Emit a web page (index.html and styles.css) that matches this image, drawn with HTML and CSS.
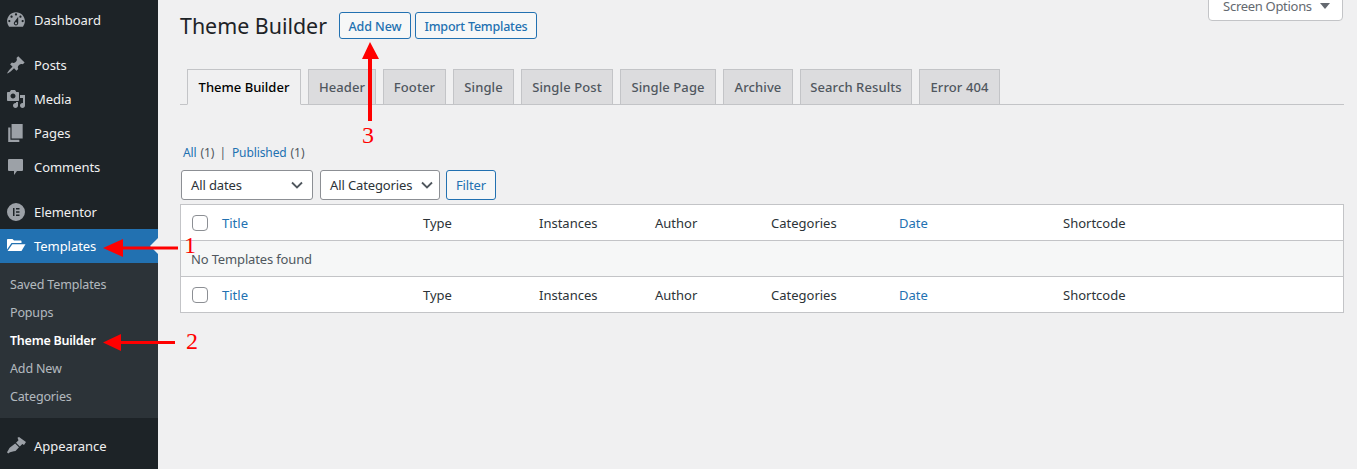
FILE: index.html
```html
<!DOCTYPE html>
<html lang="en">
<head>
<meta charset="utf-8">
<title>Theme Builder</title>
<link rel="stylesheet" href="styles.css">
</head>
<body>
<div class="page">
  <nav class="sidebar">
    <a class="item"><svg class="ico" viewBox="1 1 18 18"><path fill-rule="evenodd" d="M3.760 16h12.480c1.100-1.370 1.760-3.110 1.760-5 0-4.420-3.580-8-8-8s-8 3.580-8 8c0 1.890.66 3.630 1.760 5zM10 4c.55 0 1 .45 1 1s-.45 1-1 1-1-.45-1-1 .45-1 1-1zM6 6c.55 0 1 .45 1 1s-.45 1-1 1-1-.45-1-1 .45-1 1-1zm8 0c.55 0 1 .45 1 1s-.45 1-1 1-1-.45-1-1 .45-1 1-1zm-5.370 5.550L12 7v6c0 1.100-.9 2-2 2s-2-.9-2-2c0-.57.24-1.080.63-1.450zM4 10c.55 0 1 .45 1 1s-.45 1-1 1-1-.45-1-1 .45-1 1-1zm12 0c.55 0 1 .45 1 1s-.45 1-1 1-1-.45-1-1 .45-1 1-1zm-5 3c0-.55-.45-1-1-1s-1 .45-1 1 .45 1 1 1 1-.45 1-1z"/></svg><span>Dashboard</span></a>
    <div class="group">
      <a class="item"><svg class="ico" viewBox="0 0 20 20"><path d="M10.440 3.020l1.820-1.820 6.360 6.350-1.830 1.820c-1.050-.68-2.480-.57-3.410.36l-.75.75c-.92.93-1.040 2.350-.35 3.410l-1.830 1.820-2.410-2.410-2.800 2.790c-.42.42-3.380 2.710-3.800 2.290s1.860-3.390 2.280-3.810l2.790-2.790L4.100 9.360l1.830-1.820c1.050.69 2.480.57 3.400-.36l.75-.75c.93-.92 1.050-2.350.36-3.410z"/></svg><span>Posts</span></a>
      <a class="item"><svg class="ico" viewBox="0 0 20 20"><path fill-rule="evenodd" d="M13 11V4c0-.55-.45-1-1-1h-1.670L9 1H5L3.670 3H2c-.55 0-1 .45-1 1v7c0 .55.45 1 1 1h10c.55 0 1-.45 1-1zM7 4.500c1.380 0 2.500 1.120 2.500 2.500S8.380 9.500 7 9.500 4.500 8.380 4.500 7 5.620 4.500 7 4.500zM14 6h5v10.500c0 1.380-1.120 2.500-2.500 2.500S14 17.880 14 16.500s1.120-2.500 2.500-2.500c.17 0 .34.020.5.050V9h-3V6zm-4 8.050V13h2v3.500c0 1.380-1.120 2.500-2.500 2.500S7 17.880 7 16.500 8.120 14 9.500 14c.17 0 .34.020.5.050z"/></svg><span>Media</span></a>
      <a class="item"><svg class="ico" viewBox="1 1 18 18"><path d="M6 15V2h10v13H6zm-1 1h8v2H3V5h2v11z"/></svg><span>Pages</span></a>
      <a class="item"><svg class="ico" viewBox="0 0 20 20"><path d="M3 2h13a1 1 0 0 1 1 1v10a1 1 0 0 1-1 1h-5l-3 4v-4H3a1 1 0 0 1-1-1V3a1 1 0 0 1 1-1z"/></svg><span>Comments</span></a>
    </div>
    <div class="group">
      <a class="item"><svg class="ico" viewBox="0 0 20 20"><path fill-rule="evenodd" d="M10 1a9 9 0 1 0 0 18 9 9 0 0 0 0-18zM7 6h1.500v8H7zM10 6h3.500v1.500H10zM10 9.200h3.500v1.600H10zM10 12.500h3.500V14H10z"/></svg><span>Elementor</span></a>
      <a class="item current"><svg class="ico" viewBox="0 0 20 20"><path d="M1 4c0-.6.4-1 1-1h4.500L8 4.500h6.500c.6 0 1 .4 1 1V7H5.500L1 13.500z"/><path d="M6.300 8.200H19.500L15.500 15H1.600z"/></svg><span>Templates</span></a>
    </div>
    <ul class="submenu">
      <li>Saved Templates</li>
      <li>Popups</li>
      <li class="on">Theme Builder</li>
      <li>Add New</li>
      <li>Categories</li>
    </ul>
    <div class="group">
      <a class="item"><svg class="ico" viewBox="0 0 20 20"><path d="M11.500 1.800 13 1 20 6 18 9 16.300 8 13.800 10.500 10 6.700 12.500 4.200z"/><path d="M9.200 7.500 13 11.300 9.500 15C7.500 15.500 4.500 15.500 2.200 17.500L1 16.200C2.500 14 3 12.500 4 11.500z"/></svg><span>Appearance</span></a>
    </div>
  </nav>

  <main class="main">
    <button class="screen-options">Screen Options <i class="tri"></i></button>
    <header class="heading">
      <h1>Theme Builder</h1>
      <a class="btn add">Add New</a>
      <a class="btn import">Import Templates</a>
    </header>
    <div class="tabs">
      <a class="tab active">Theme Builder</a>
      <a class="tab">Header</a>
      <a class="tab">Footer</a>
      <a class="tab">Single</a>
      <a class="tab">Single Post</a>
      <a class="tab">Single Page</a>
      <a class="tab">Archive</a>
      <a class="tab">Search Results</a>
      <a class="tab">Error 404</a>
    </div>
    <div class="views"><a>All</a> (1) <b>|</b> <a>Published</a> (1)</div>
    <div class="filters">
      <div class="select dates">All dates<svg class="chev" viewBox="0 0 12 8"><path d="M1 1.500 6 6.500 11 1.500"/></svg></div>
      <div class="select cats">All Categories<svg class="chev" viewBox="0 0 12 8"><path d="M1 1.500 6 6.500 11 1.500"/></svg></div>
      <a class="btn filter">Filter</a>
    </div>
    <div class="table">
      <div class="row">
        <span class="cell chk"><i class="box"></i></span>
        <span class="cell link">Title</span><span class="cell">Type</span><span class="cell">Instances</span><span class="cell">Author</span><span class="cell">Categories</span><span class="cell link">Date</span><span class="cell">Shortcode</span>
      </div>
      <div class="empty">No Templates found</div>
      <div class="row foot">
        <span class="cell chk"><i class="box"></i></span>
        <span class="cell link">Title</span><span class="cell">Type</span><span class="cell">Instances</span><span class="cell">Author</span><span class="cell">Categories</span><span class="cell link">Date</span><span class="cell">Shortcode</span>
      </div>
    </div>
  </main>

  <svg class="arrows" viewBox="0 0 1357 469">
    <path d="M178 246.500H123V239L103 248 123 257V249.500H178z"/>
    <path d="M175 341H121V334L103 342.500 121 351V344H175z"/>
    <path d="M368 121V59H362L370 42 379 59H372V121z"/>
  </svg>
  <span class="num n1">1</span>
  <span class="num n2">2</span>
  <span class="num n3">3</span>
</div>
</body>
</html>
```
FILE: styles.css
```css
* { box-sizing: border-box; }
html, body { margin: 0; height: 100%; overflow: hidden; }
body { background: #f0f0f1; font-family: "Noto Sans", "Open Sans", sans-serif; font-size: 13px; color: #3c434a; }
.page { position: relative; display: flex; width: 1357px; height: 469px; overflow: hidden; }

.sidebar { width: 158px; flex: none; background: #1d2327; padding-top: 3px; display: flex; flex-direction: column; }
.group { margin-top: 11px; }
.item { display: flex; align-items: center; height: 34px; padding-left: 6px; color: #f0f0f1; font-size: 13px; position: relative; letter-spacing: -.05px; }
.item span { margin-left: 8px; }
.ico { width: 20px; height: 20px; fill: #9ca1a7; flex: none; }
.current { background: #2271b1; color: #fff; }
.current .ico { fill: #fff; }
.current::after { content: ""; position: absolute; right: 0; top: 9px; border: 8px solid transparent; border-right-color: #f0f0f1; border-left-width: 0; }
.submenu { list-style: none; margin: 0; padding: 8px 0 6px; background: #2c3338; height: 155px; }
.submenu li { height: 28px; line-height: 28px; padding-left: 10px; color: rgba(240,246,252,.7); font-size: 12.5px; letter-spacing: -.15px; }
.submenu .on { color: #fff; font-weight: 600; letter-spacing: -.25px; }

.main { flex: 1; min-width: 0; position: relative; padding-left: 22px; padding-right: 13px; }
.screen-options { position: absolute; top: -10px; right: 14px; width: 135px; height: 31px; padding: 0 0 0 2px; background: #fff; border: 1px solid #c3c4c7; border-radius: 0 0 4px 4px; color: #646970; font: 13px "Noto Sans", sans-serif; letter-spacing: -.3px; }
.tri { display: inline-block; margin-left: 5px; border: 5px solid transparent; border-top: 6px solid #646970; border-bottom: 0; vertical-align: 2px; }

.heading { display: flex; align-items: flex-start; padding-top: 12px; height: 69px; }
h1 { margin: 0 12px 0 0; font-size: 21.4px; font-weight: 400; line-height: 28px; color: #1d2327; width: 147px; white-space: nowrap; }
.btn { display: inline-flex; align-items: center; justify-content: center; height: 27px; margin-right: 4px; border: 1px solid #2271b1; border-radius: 3px; background: #f6f7f7; color: #2271b1; font-size: 12.5px; font-weight: 500; letter-spacing: -.1px; white-space: nowrap; }
.add { width: 72px; padding-top: 1px; }
.import { width: 122px; padding-top: 1px; letter-spacing: -.22px; }

.tabs { display: grid; grid-template-columns: 114px 68px 63px 61px 92px 96px 70px 112px 81px; gap: 7px; height: 36px; padding-left: 7px; border-bottom: 1px solid #c3c4c7; }
.tab { display: flex; align-items: center; justify-content: center; height: 36px; border: 1px solid #c3c4c7; background: #dcdcde; color: #50575e; font-size: 13px; font-weight: 500; letter-spacing: .1px; white-space: nowrap; }
.active { background: #f0f0f1; color: #000; border-bottom-color: #f0f0f1; letter-spacing: 0; }

.views { margin-top: 39px; height: 17px; line-height: 17px; font-size: 12px; padding-left: 3px; color: #50575e; word-spacing: 1px; letter-spacing: -.1px; }
.views a { color: #2271b1; }
.views b { font-weight: 400; color: #50575e; margin: 0 2px 0 1px; }

.filters { display: flex; align-items: flex-start; margin-top: 9px; padding-left: 1px; gap: 7px; }
.select { display: flex; align-items: center; justify-content: space-between; height: 30px; padding: 0 9px; background: #fff; border: 1px solid #8c8f94; border-radius: 3px; color: #2c3338; font-size: 13px; letter-spacing: -.12px; }
.dates { width: 132px; }
.cats { width: 120px; padding-right: 6px; }
.chev { width: 12px; height: 8px; fill: none; stroke: #50575e; stroke-width: 1.800; }
.filter { height: 30px; width: 50px; margin: 0 0 0 -1px; font-size: 13px; font-weight: 400; }

.table { margin-top: 4px; height: 109px; background: #fff; border: 1px solid #c3c4c7; display: flex; flex-direction: column; }
.row { display: grid; grid-template-columns: 31px 201px 116px 116px 116px 128px 164px 1fr; height: 35px; align-items: center; color: #2c3338; font-size: 13px; letter-spacing: 0; }
.foot { height: 35px; }
.cell { padding-left: 10px; }
.chk { padding-left: 11px; display: flex; }
.box { display: block; width: 16px; height: 16px; border: 1px solid #8c8f94; border-radius: 4px; background: #fff; }
.link { color: #2271b1; }
.empty { height: 37px; line-height: 37px; background: #f6f7f7; border-top: 1px solid #c3c4c7; border-bottom: 1px solid #c3c4c7; padding-left: 10px; color: #50575e; font-size: 13px; letter-spacing: -.15px; }

.arrows { position: absolute; inset: 0; width: 1357px; height: 469px; fill: #f00; pointer-events: none; }
.num { position: absolute; font-family: "Liberation Serif", serif; font-size: 24px; line-height: 24px; color: #f00; }
.n1 { left: 184px; top: 233px; }
.n2 { left: 186px; top: 329px; }
.n3 { left: 362px; top: 123px; }
```
